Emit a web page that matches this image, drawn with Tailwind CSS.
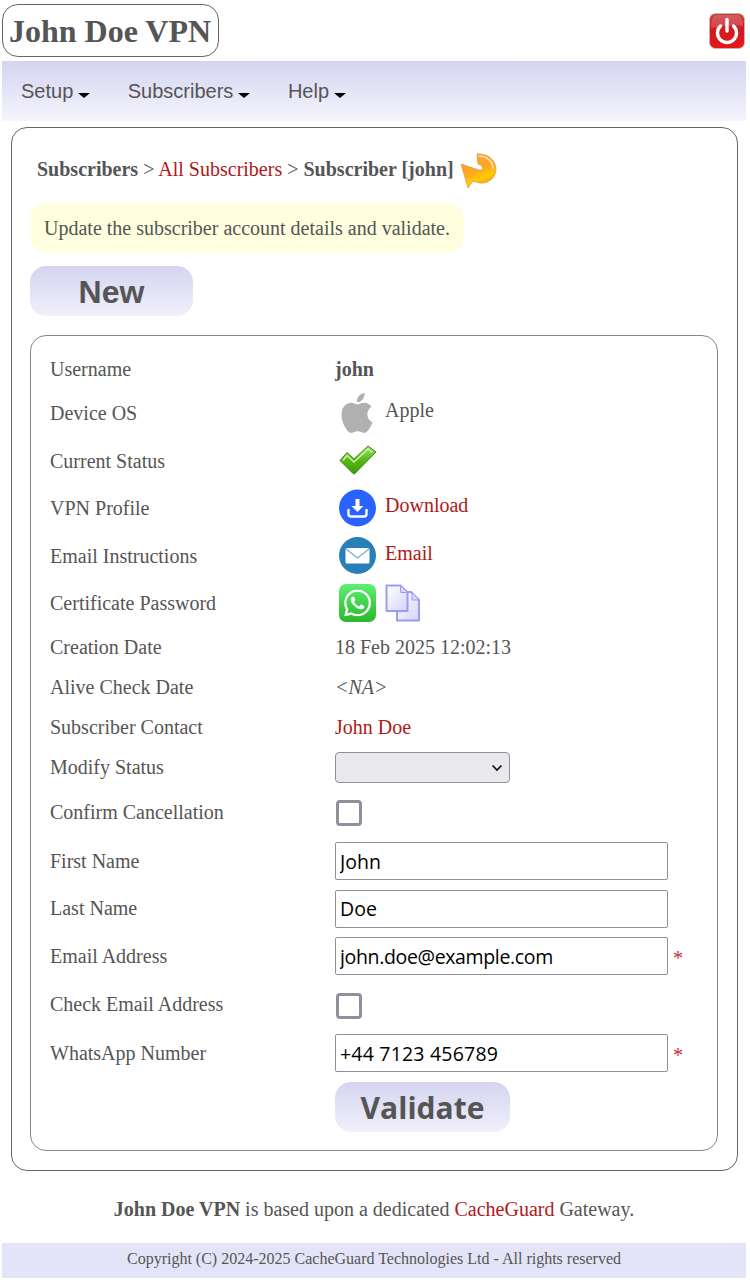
<!DOCTYPE html>
<html lang="en">
<head>
    <meta charset="UTF-8">
    <meta name="viewport" content="width=device-width, initial-scale=1.0">
    <script src="https://cdn.jsdelivr.net/npm/@tailwindcss/browser@4"></script>
    <title>John Doe VPN</title>
</head>
<body class="bg-white pl-[2px] pr-[4px] pb-[5px] text-[#555] text-[20px] font-['Liberation_Serif',serif]">
    <!-- header -->
    <header class="h-[61px] pt-1 flex justify-between">
        <a href="#" class="w-[217px] h-[53px] border border-[#666] rounded-2xl text-[32px] leading-[53px] font-bold pl-[6px]">John Doe VPN</a>
        <a href="#" class="mt-[9px] mr-px">
            <svg class="w-9 h-9" viewBox="0 0 36 36">
                <defs>
                    <linearGradient id="pw" x1="0" y1="0" x2="0" y2="1"><stop offset="0" stop-color="#c84044"/><stop offset="0.45" stop-color="#d01c20"/><stop offset="1" stop-color="#e8141a"/></linearGradient>
                </defs>
                <rect x="0.5" y="0.5" width="35" height="35" rx="6" fill="url(#pw)" stroke="#c8b4b4"/>
                <path d="M2 15C2 6 4 2 8 2h20c4 0 6 4 6 11-9-2-22 0-32 2z" fill="#fff" fill-opacity="0.16"/>
                <path d="M11.500 13a9.500 9.500 0 1 0 13 0" fill="none" stroke="#fff" stroke-width="3.400" stroke-linecap="round"/>
                <path d="M18 6.500v11.500" stroke="#fff" stroke-width="3.400" stroke-linecap="round"/>
            </svg>
        </a>
    </header>

    <!-- menu -->
    <nav class="h-[60px] bg-gradient-to-b from-[#d4d4f0] to-[#f5f5fd] flex items-center pl-[19px] gap-[37.5px] text-[20px] font-['Liberation_Sans',sans-serif]">
        <a href="#" class="flex items-center gap-[5px]">Setup <span class="mt-2 border-x-[6.5px] border-x-transparent border-t-[5px] border-t-black"></span></a>
        <a href="#" class="flex items-center gap-[5px]">Subscribers <span class="mt-2 border-x-[6.5px] border-x-transparent border-t-[5px] border-t-black"></span></a>
        <a href="#" class="flex items-center gap-[5px]">Help <span class="mt-2 border-x-[6.5px] border-x-transparent border-t-[5px] border-t-black"></span></a>
    </nav>

    <main class="mt-[6px] ml-[9px] mr-[8px] h-[1044px] border border-[#666] rounded-2xl pl-[18px] pr-[19px]">
        <div class="h-[75px] pl-[7px] pt-[25px] flex items-start">
            <p class="whitespace-pre mt-[1px]"><b>Subscribers</b> &gt; <a href="#" class="text-[#b01818]">All Subscribers</a> &gt; <b>Subscriber [john]</b></p>
            <svg class="w-[37px] h-[37px] ml-[6px]" viewBox="0 0 37 37">
                <defs>
                    <linearGradient id="rf" x1="0.2" y1="0" x2="0.6" y2="1"><stop offset="0" stop-color="#f8a040"/><stop offset="0.5" stop-color="#fba820"/><stop offset="0.75" stop-color="#ffcc00"/><stop offset="1" stop-color="#f09020"/></linearGradient>
                </defs>
                <path d="M17 1C27 0 36 7 36 16C36 25 28 31 20 30L13 28L8 35L1 11L19 17C23 18 25 13 18 11Z" fill="url(#rf)" stroke="#e89848" stroke-width="0.8" stroke-linejoin="round"/>
                <path d="M19 3C26 3 33 8 33 15" fill="none" stroke="#fde4c0" stroke-width="1.600" stroke-linecap="round"/>
            </svg>
        </div>

        <p class="w-[434px] h-[50px] rounded-2xl bg-[#ffffe0] pl-[14px] leading-[50px]">Update the subscriber account details and validate.</p>

        <button class="block mt-[13px] pt-[2px] w-[163px] h-[50px] rounded-2xl bg-gradient-to-b from-[#d4d4f0] to-[#f0f0fb] text-[32px] font-bold font-['Liberation_Sans',sans-serif] text-[#555]">New</button>

        <section class="mt-[19px] h-[816px] border border-[#888] rounded-2xl pl-[19px] pt-[13px]">
            <div class="h-[40px] flex items-center"><span class="w-[285px]">Username</span><b>john</b></div>
            <div class="h-[48px] flex items-center">
                <span class="w-[285px]">Device OS</span>
                <svg class="w-[38px] h-[40px] ml-[3px] -mt-[1px]" viewBox="0 0 24 24" preserveAspectRatio="none" fill="#b0b0b0"><path d="M12.152 6.896c-.948 0-2.415-1.078-3.96-1.04-2.04.027-3.91 1.183-4.961 3.014-2.117 3.675-.546 9.103 1.519 12.09 1.013 1.454 2.208 3.09 3.792 3.039 1.52-.065 2.09-.987 3.935-.987 1.831 0 2.35.987 3.96.948 1.637-.026 2.676-1.48 3.676-2.948 1.156-1.688 1.636-3.325 1.662-3.415-.039-.013-3.182-1.221-3.22-4.857-.026-3.04 2.48-4.494 2.597-4.559-1.429-2.09-3.623-2.324-4.39-2.376-2-.156-3.675 1.09-4.61 1.09zM15.53 3.83c.843-1.012 1.4-2.427 1.245-3.83-1.207.052-2.662.805-3.532 1.818-.78.896-1.454 2.338-1.273 3.714 1.338.104 2.715-.688 3.559-1.701"/></svg>
                <span class="ml-[9px] -mt-[7px]">Apple</span>
            </div>
            <div class="h-[48px] flex items-center">
                <span class="w-[285px]">Current Status</span>
                <svg class="w-[38px] h-[30px] ml-[4px] -mt-[2px]" viewBox="0 0 38 30">
                    <defs>
                        <linearGradient id="ck" x1="0" y1="0" x2="0" y2="1"><stop offset="0" stop-color="#a4e070"/><stop offset="0.5" stop-color="#58b818"/><stop offset="1" stop-color="#3c9a08"/></linearGradient>
                    </defs>
                    <path d="M1 15.500L8 7.500L15 14L29 1L37 7L16 28.500a1.500 1.500 0 0 1-2 0z" fill="url(#ck)" stroke="#3c8c10" stroke-width="1" stroke-linejoin="round"/>
                    <path d="M4 15.500L8 10.500L15 17L29 4L33 7" fill="none" stroke="#d0f0a8" stroke-width="1.500"/>
                </svg>
            </div>
            <div class="h-[47px] flex items-center">
                <span class="w-[285px] -mt-px">VPN Profile</span>
                <svg class="w-[37px] h-[38px] ml-[4px] -mt-[2px]" viewBox="0 0 37 38">
                    <circle cx="18.500" cy="19" r="18.500" fill="#2962ff"/>
                    <path d="M16.500 10h4v7h4l-6 6-6-6h4z" fill="#fff"/>
                    <path d="M9.500 21v4a2.500 2.500 0 0 0 2.500 2.500h13a2.500 2.500 0 0 0 2.500-2.500v-4" fill="none" stroke="#fff" stroke-width="2.400" stroke-linecap="round"/>
                </svg>
                <a href="#" class="ml-[9px] -mt-[7px] text-[#b01818]">Download</a>
            </div>
            <div class="h-[48px] flex items-center">
                <span class="w-[285px]">Email Instructions</span>
                <svg class="w-[37px] h-[37px] ml-[4px] -mt-[2px]" viewBox="0 0 37 37">
                    <circle cx="18.500" cy="18.500" r="18.500" fill="#2980b9"/>
                    <rect x="6.500" y="11" width="24" height="15.500" rx="1.500" fill="#fff"/>
                    <path d="M7 12l11.500 9L30 12" fill="none" stroke="#7aaed2" stroke-width="1.300"/>
                </svg>
                <a href="#" class="ml-[9px] -mt-[7px] text-[#b01818]">Email</a>
            </div>
            <div class="h-[46px] flex items-center">
                <span class="w-[285px]">Certificate Password</span>
                <svg class="w-[37px] h-[38px] ml-[4px]" viewBox="0 0 37 38">
                    <defs>
                        <linearGradient id="wa" x1="0" y1="0" x2="0" y2="1"><stop offset="0" stop-color="#5df070"/><stop offset="1" stop-color="#28b82c"/></linearGradient>
                    </defs>
                    <rect width="37" height="38" rx="7" fill="url(#wa)"/>
                    <svg x="5" y="5.500" width="27" height="27" viewBox="0 0 24 24" fill="#fff"><path d="M17.472 14.382c-.297-.149-1.758-.867-2.03-.967-.273-.099-.471-.148-.67.15-.197.297-.767.966-.94 1.164-.173.199-.347.223-.644.075-.297-.15-1.255-.463-2.39-1.475-.883-.788-1.48-1.761-1.653-2.059-.173-.297-.018-.458.13-.606.134-.133.298-.347.446-.52.149-.174.198-.298.298-.497.099-.198.05-.371-.025-.52-.075-.149-.669-1.612-.916-2.207-.242-.579-.487-.5-.669-.51-.173-.008-.371-.01-.57-.01-.198 0-.52.074-.792.372-.272.297-1.04 1.016-1.04 2.479 0 1.462 1.065 2.875 1.213 3.074.149.198 2.096 3.2 5.077 4.487.709.306 1.262.489 1.694.625.712.227 1.36.195 1.871.118.571-.085 1.758-.719 2.006-1.413.248-.694.248-1.289.173-1.413-.074-.124-.272-.198-.57-.347m-5.421 7.403h-.004a9.87 9.87 0 01-5.031-1.378l-.361-.214-3.741.982.998-3.648-.235-.374a9.86 9.86 0 01-1.51-5.26c.001-5.45 4.436-9.884 9.888-9.884 2.64 0 5.122 1.03 6.988 2.898a9.825 9.825 0 012.893 6.994c-.003 5.45-4.437 9.884-9.885 9.884m8.413-18.297A11.815 11.815 0 0012.05 0C5.495 0 .16 5.335.157 11.892c0 2.096.547 4.142 1.588 5.945L.057 24l6.305-1.654a11.882 11.882 0 005.683 1.448h.005c6.554 0 11.89-5.335 11.893-11.893a11.821 11.821 0 00-3.48-8.413z"/></svg>
                </svg>
                <svg class="w-[36px] h-[38px] ml-[9px]" viewBox="0 0 36 38">
                    <defs>
                        <linearGradient id="dc" x1="0" y1="0" x2="1" y2="1"><stop offset="0" stop-color="#ffffff"/><stop offset="1" stop-color="#d4d4ff"/></linearGradient>
                    </defs>
                    <path d="M12 8h14l8 8v20.500H12z" fill="url(#dc)" stroke="#9c9cf4" stroke-width="2" stroke-linejoin="round"/>
                    <path d="M1.500 1.500h14l7 7v18.500h-21z" fill="url(#dc)" stroke="#9c9cf4" stroke-width="2" stroke-linejoin="round"/>
                    <path d="M15.500 1.500v7h7z" fill="#d8d8fc" stroke="#9c9cf4"/>
                    <path d="M27 8v8h7z" fill="#d8d8fc" stroke="#9c9cf4"/>
                </svg>
            </div>
            <div class="h-[42px] flex items-center"><span class="w-[285px]">Creation Date</span><span>18 Feb 2025 12:02:13</span></div>
            <div class="h-[39px] flex items-center"><span class="w-[285px] -mt-px">Alive Check Date</span><i class="-mt-px">&lt;NA&gt;</i></div>
            <div class="h-[40px] flex items-center"><span class="w-[285px]">Subscriber Contact</span><a href="#" class="text-[#b01818]">John Doe</a></div>
            <div class="h-[40px] flex items-center">
                <span class="w-[285px]">Modify Status</span>
                <div class="relative w-[175px] h-[31px]">
                    <select class="appearance-none block w-full h-full border border-[#8f8f9d] rounded-[4px] bg-[#e9e9ed] text-black"><option></option></select>
                    <svg class="absolute right-[7px] top-[12px] w-[12px] h-[8px]" viewBox="0 0 12 8"><path d="M1.500 1.500L6 6l4.500-4.500" fill="none" stroke="#111" stroke-width="1.700"/></svg>
                </div>
            </div>
            <div class="h-[50px] flex items-center">
                <span class="w-[285px]">Confirm Cancellation</span>
                <input type="checkbox" class="appearance-none w-[26px] h-[26px] ml-[1px] mt-[2px] bg-white border-[3px] border-[#8f8f9d] rounded-[4px]">
            </div>
            <div class="h-[48px] flex items-center">
                <span class="w-[285px]">First Name</span>
                <input type="text" value="John" class="w-[333px] h-[38px] px-1 border border-[#8f8f9d] rounded-[2px] text-black text-[19.5px] font-['Open_Sans',sans-serif]">
            </div>
            <div class="h-[47px] flex items-center">
                <span class="w-[285px] -mt-px">Last Name</span>
                <input type="text" value="Doe" class="w-[333px] h-[38px] px-1 border border-[#8f8f9d] rounded-[2px] text-black text-[19.5px] font-['Open_Sans',sans-serif]">
            </div>
            <div class="h-[48px] flex items-center">
                <span class="w-[285px]">Email Address</span>
                <input type="text" value="john.doe@example.com" class="w-[333px] h-[38px] px-1 border border-[#8f8f9d] rounded-[2px] text-black text-[19.5px] tracking-[-0.35px] font-['Open_Sans',sans-serif]">
                <span class="ml-[5px] mt-[4px] text-[#c03040]">*</span>
            </div>
            <div class="h-[49px] flex items-center">
                <span class="w-[285px] -mt-px">Check Email Address</span>
                <input type="checkbox" class="appearance-none w-[26px] h-[26px] ml-[1px] mt-[2px] bg-white border-[3px] border-[#8f8f9d] rounded-[4px]">
            </div>
            <div class="h-[48px] flex items-center">
                <span class="w-[285px]">WhatsApp Number</span>
                <input type="text" value="+44 7123 456789" class="w-[333px] h-[38px] px-1 border border-[#8f8f9d] rounded-[2px] text-black text-[19.5px] tracking-[0.2px] font-['Open_Sans',sans-serif]">
                <span class="ml-[5px] mt-[4px] text-[#c03040]">*</span>
            </div>
            <button class="block mt-[5px] ml-[285px] w-[175px] h-[50px] rounded-2xl bg-gradient-to-b from-[#d4d4f0] to-[#f0f0fb] text-[30px] font-bold font-['Open_Sans',sans-serif] text-[#555]">Validate</button>
        </section>
    </main>

    <footer class="mt-[24px] text-center">
        <p class="h-[48px] leading-[29px]"><b>John Doe VPN</b> is based upon a dedicated <a href="#" class="text-[#b01818]">CacheGuard</a> Gateway.</p>
        <p class="h-[35px] leading-[32px] bg-[#e4e4f8] text-[16px]">Copyright (C) 2024-2025 CacheGuard Technologies Ltd - All rights reserved</p>
    </footer>
</body>
</html>
